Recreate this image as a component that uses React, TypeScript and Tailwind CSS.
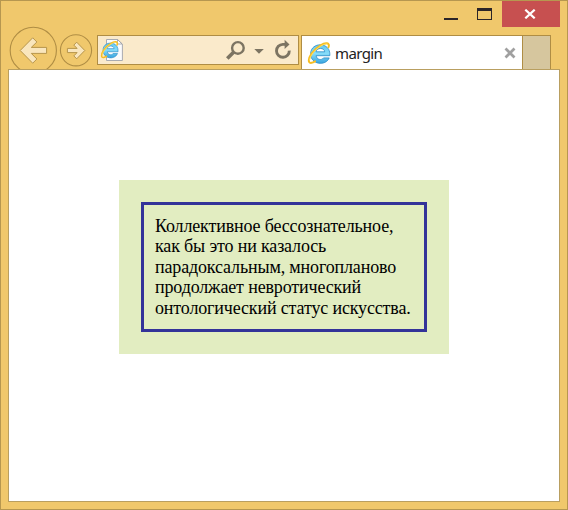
function Explorer({ className }: { className: string }) {
  return (
    <svg viewBox="0 0 24 24" className={className}>
      <defs>
        <linearGradient id="blue" gradientUnits="userSpaceOnUse" x1="0" y1="3" x2="0" y2="22">
          <stop offset="0" stopColor="#62c6f0" />
          <stop offset=".5" stopColor="#86dcf9" />
          <stop offset="1" stopColor="#3aa5df" />
        </linearGradient>
      </defs>
      <path
        d="M22.8 14.7H9.1C9.6 18.8 14.8 19.6 16.5 16.9H22.2C18.7 25.5 3.6 23.8 3.6 12.8C3.6.7 24 .2 22.8 14.7ZM9.1 10.8H17.7C17.4 6.4 9.7 6.3 9.1 10.8Z"
        fill="url(#blue)"
        stroke="#2a8bc6"
        strokeWidth=".8"
        fillRule="evenodd"
      />
      <path
        d="M21.5 6.2C23.2 1.5 18.4 1.2 13.5 4.3C6.2 8.6.3 17.3 2.2 21C3.1 22.6 5.6 21.8 8 20.3"
        fill="none"
        stroke="#f6bd22"
        strokeWidth="2"
        strokeLinecap="round"
      />
      <path d="M20.5 3.1C17.8 2.3 12.4 5.5 8.5 9.1C5.2 12.3 3 16.5 2.6 19" fill="none" stroke="#ffe262" strokeWidth="1" />
    </svg>
  );
}

function Navigation() {
  return (
    <svg width="89" height="68" viewBox="8 1 89 68" className="shrink-0">
      <g fill="none" stroke="#af8d44">
        <circle cx="33.3" cy="50.4" r="23.1" strokeWidth="1.1" />
        <circle cx="76" cy="50.3" r="15.6" strokeWidth="1.1" />
      </g>
      <g fill="#f9e6bd" stroke="#b7954b" strokeWidth="1" strokeLinejoin="miter">
        <path d="M20.2 50.5L32.7 37.8L36.9 42L31.3 47.4H46.6V53.4H31.3L36.9 59L32.7 63.2Z" />
        <path d="M84.8 50.5L76.7 42.2L73.8 45.1L77.1 48.4H67.4V52.6H77.1L73.8 55.9L76.7 58.8Z" />
      </g>
    </svg>
  );
}

function WindowControls() {
  return (
    <div className="flex h-[34px] items-start justify-end">
      <div className="mt-[17px] h-[2px] w-[14px] bg-[#2b2528]" />
      <div className="ml-[19px] mt-[7px] h-3 w-[15px] border border-t-[3px] border-[#2b2528]" />
      <div className="ml-[10px] flex h-[26px] w-[58px] items-center justify-center bg-[#c75050]">
        <svg width="12" height="10" viewBox="0 0 12 10" className="-translate-x-px">
          <path d="M1.3 .7L10.7 9.3M10.7 .7L1.3 9.3" stroke="white" strokeWidth="2.2" />
        </svg>
      </div>
    </div>
  );
}

function AddressBar() {
  return (
    <div className="flex h-[30px] w-[202px] border border-[#af8d44] bg-[#faeacb]">
      <svg width="25" height="28" viewBox="98 36 25 28">
        <path d="M106.5 39.5H117.5L122.4 44V60.5H106.5Z" fill="#fbfbfc" stroke="#a9abb0" />
        <path d="M117.5 39.5V44H122Z" fill="#fff" stroke="#999ca2" strokeWidth=".8" />
        <svg x="100.2" y="40" width="18.8" height="19.2" viewBox="0 0 24 24" preserveAspectRatio="none">
          <Explorer className="size-6" />
        </svg>
      </svg>
      <svg width="70" height="28" viewBox="223 36 70 28" className="ml-auto mr-[5px]" fill="none" stroke="#7c7462">
        <circle cx="237.9" cy="47.9" r="5.8" strokeWidth="2.4" />
        <path d="M233.8 52.1L227.3 58.6" strokeWidth="3.6" />
        <path d="M254.3 49H263.8L259 53.8Z" fill="#7c7462" stroke="none" />
        <path d="M285.5 44.4H282.8A6.4 6.4 0 1 0 289.3 50.6" strokeWidth="2.9" />
        <path d="M284.6 39.7L289.5 44.4L284.6 49Z" fill="#7c7462" stroke="none" />
      </svg>
    </div>
  );
}

export default function App() {
  return (
    <div className="flex h-[510px] w-[568px] flex-col overflow-hidden border border-[#b69750] bg-[#f0c86c] px-[7px] pb-[7px]">
      <header className="flex h-[68px] shrink-0">
        <Navigation />
        <div className="w-[463px]">
          <WindowControls />
          <div className="flex h-[34px]">
            <AddressBar />
            <div className="ml-[2px] flex w-[222px] items-center border border-b-0 border-[#af8d44] bg-white pl-[5px] pr-[6px]">
              <Explorer className="h-6 w-6" />
              <span className="ml-1 font-['Noto_Sans',sans-serif] text-[15px] leading-5 tracking-[-0.6px] text-[#222]">
                margin
              </span>
              <svg width="12" height="12" viewBox="0 0 12 12" className="ml-auto">
                <path d="M1.5 1.5L10.5 10.5M10.5 1.5L1.5 10.5" stroke="#a0a0a0" strokeWidth="2.7" />
              </svg>
            </div>
            <div className="-ml-px w-[29px] border border-b-0 border-[#af8d44] bg-[#d6c69e]" />
          </div>
        </div>
      </header>
      <main className="h-[433px] w-[552px] shrink-0 border border-[#b99f60] bg-white pl-[110px] pt-[110px]">
        <div className="h-[174px] w-[330px] bg-[#e2edc1] px-[22px] py-[22px]">
          <p className="h-[130px] w-[286px] whitespace-nowrap border-[3px] border-[#333399] pl-[11px] pt-[11px] font-['Liberation_Serif',serif] text-[18px] leading-[20.4px] tracking-[-0.15px] text-black">
            Коллективное бессознательное,
            <br />
            как бы это ни казалось
            <br />
            парадоксальным, многопланово
            <br />
            продолжает невротический
            <br />
            онтологический статус искусства.
          </p>
        </div>
      </main>
    </div>
  );
}
